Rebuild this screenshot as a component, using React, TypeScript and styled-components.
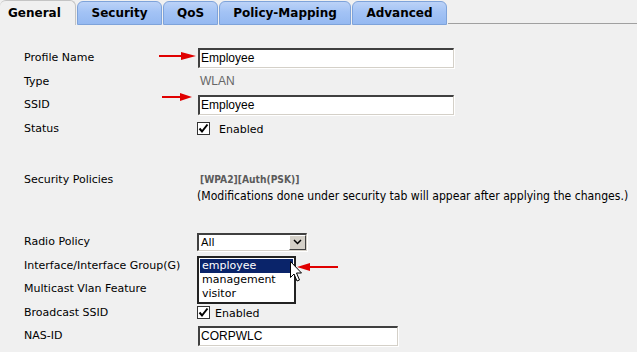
import React from "react";
import styled, { createGlobalStyle } from "styled-components";

const Global = createGlobalStyle`
  html, body { margin: 0; padding: 0; background: #f0f0f0; }
  body { font-family: "DejaVu Sans", Verdana, sans-serif; font-size: 11px; color: #000; }
`;

const Page = styled.div`
  position: relative;
  width: 637px;
  height: 352px;
  overflow: hidden;
  background: #f0f0f0;
`;

const TabBar = styled.div`
  display: flex;
  align-items: flex-end;
  height: 25px;
  gap: 1px;
`;

const Tab = styled.div<{ $active?: boolean; $w: number }>`
  box-sizing: border-box;
  width: ${(p) => p.$w}px;
  display: flex;
  align-items: center;
  justify-content: ${(p) => (p.$active ? "flex-start" : "center")};
  padding-left: ${(p) => (p.$active ? "8px" : "0")};
  font-family: "DejaVu Sans", Verdana, sans-serif;
  font-weight: bold;
  font-size: 12px;
  color: #000;
  border-radius: 6px 6px 0 0;
  border: 1px solid ${(p) => (p.$active ? "#c4c4c4" : "#7ea3da")};
  border-left-width: ${(p) => (p.$active ? "0" : "1px")};
  border-bottom: ${(p) => (p.$active ? "none" : "1px solid #7ea3da")};
  background: ${(p) =>
    p.$active ? "#f0f0f0" : "linear-gradient(#bcd2f7, #a3c3f5 45%, #95b9f1)"};
  height: ${(p) => (p.$active ? "25px" : "24px")};
`;

const TabFill = styled.div`
  flex: 1;
  height: 1px;
  margin-bottom: 1px;
  background: #a0a0a0;
`;

const Form = styled.div`
  padding: 21px 0 0 24px;
  display: flex;
  flex-direction: column;
`;

const Row = styled.div<{ $h?: number; $mt?: number }>`
  display: grid;
  grid-template-columns: 173px 1fr;
  align-items: center;
  height: ${(p) => p.$h ?? 23.5}px;
  margin-top: ${(p) => p.$mt ?? 0}px;
`;

const Label = styled.div`
  font-family: "DejaVu Sans", Verdana, sans-serif;
  font-size: 11px;
  color: #000;
  white-space: nowrap;
`;

const Control = styled.div<{ $stretch?: boolean }>`
  position: relative;
  display: flex;
  align-items: center;
  align-self: ${(p) => (p.$stretch ? "stretch" : "auto")};
  white-space: nowrap;
`;

const TextInput = styled.input<{ $w: number }>`
  box-sizing: border-box;
  width: ${(p) => p.$w}px;
  height: 20px;
  margin: 0 0 0 1px;
  padding: 0 1px;
  font-family: "Liberation Sans", Arial, sans-serif;
  font-size: 12px;
  color: #000;
  background: #fff;
  border-style: solid;
  border-width: 2px 1px 1px 2px;
  border-color: #404040 #d4d0c8 #d4d0c8 #404040;
  box-shadow: 1px 1px 0 #ffffff;
  outline: none;
`;

const Plain = styled.span<{ $pl?: number }>`
  font-family: "Liberation Sans", Arial, sans-serif;
  font-size: 12px;
  color: #666;
  padding-left: ${(p) => p.$pl ?? 0}px;
`;

const Policies = styled.span`
  font-family: "DejaVu Sans", Verdana, sans-serif;
  font-stretch: condensed;
  font-weight: bold;
  font-size: 10.2px;
  color: #5a5a5a;
  padding-left: 3px;
`;

const Note = styled.span`
  font-family: "DejaVu Sans", Verdana, sans-serif;
  font-stretch: condensed;
  font-size: 12.1px;
  color: #000;
`;

const CheckBox = styled.span`
  box-sizing: border-box;
  width: 13px;
  height: 13px;
  background: #fff;
  border: 1px solid #333;
  display: inline-flex;
  align-items: center;
  justify-content: center;
`;

const CheckText = styled.span<{ $gap: number }>`
  margin-left: ${(p) => p.$gap}px;
  font-family: "DejaVu Sans", Verdana, sans-serif;
  font-size: 11px;
  padding-top: 3px;
`;

const Select = styled.div`
  box-sizing: border-box;
  width: 110px;
  height: 18px;
  display: flex;
  align-items: stretch;
  background: #fff;
  border-style: solid;
  border-width: 2px 1px 1px 2px;
  border-color: #404040 #d4d0c8 #d4d0c8 #404040;
  box-shadow: 1px 1px 0 #fff;
`;

const SelectValue = styled.span`
  flex: 1;
  padding-left: 2px;
  font-family: "DejaVu Sans", Verdana, sans-serif;
  font-size: 11px;
  line-height: 15px;
`;

const SelectButton = styled.span`
  box-sizing: border-box;
  width: 17px;
  background: #d4d0c8;
  border: 1px solid;
  border-color: #fff #404040 #404040 #fff;
  display: flex;
  align-items: center;
  justify-content: center;
`;

const ListBox = styled.div`
  position: absolute;
  top: 2px;
  left: 0;
  box-sizing: border-box;
  width: 99px;
  padding: 1px;
  background: #fff;
  border: 2px solid #222;
  display: flex;
  flex-direction: column;
  z-index: 2;
`;

const Option = styled.div<{ $sel?: boolean }>`
  height: 14px;
  line-height: 14px;
  padding-left: 2px;
  font-family: "DejaVu Sans", Verdana, sans-serif;
  font-size: 11px;
  background: ${(p) => (p.$sel ? "#0a246a" : "transparent")};
  color: ${(p) => (p.$sel ? "#fff" : "#000")};
`;

const Overlay = styled.svg`
  position: absolute;
  left: 0;
  top: 0;
  pointer-events: none;
  z-index: 5;
`;

const Check = () => (
  <svg width="11" height="11" viewBox="0 0 11 11">
    <path d="M1.5 5.5 L4 8.5 L9.5 1.5" fill="none" stroke="#000" strokeWidth="2" />
  </svg>
);

export default function App() {
  return (
    <Page>
      <Global />
      <TabBar>
        <Tab $active $w={76}>General</Tab>
        <Tab $w={85}>Security</Tab>
        <Tab $w={55}>QoS</Tab>
        <Tab $w={132}>Policy-Mapping</Tab>
        <Tab $w={95}>Advanced</Tab>
        <TabFill />
      </TabBar>
      <Form>
        <Row>
          <Label>Profile Name</Label>
          <Control>
            <TextInput $w={256} readOnly value="Employee" />
          </Control>
        </Row>
        <Row>
          <Label>Type</Label>
          <Control>
            <Plain $pl={3}>WLAN</Plain>
          </Control>
        </Row>
        <Row>
          <Label>SSID</Label>
          <Control>
            <TextInput $w={256} readOnly value="Employee" />
          </Control>
        </Row>
        <Row>
          <Label>Status</Label>
          <Control>
            <CheckBox><Check /></CheckBox>
            <CheckText $gap={9}>Enabled</CheckText>
          </Control>
        </Row>
        <Row $h={20} $mt={29}>
          <Label>Security Policies</Label>
          <Control>
            <Policies>[WPA2][Auth(PSK)]</Policies>
          </Control>
        </Row>
        <Row $h={14}>
          <Label></Label>
          <Control>
            <Note>(Modifications done under security tab will appear after applying the changes.)</Note>
          </Control>
        </Row>
        <Row $mt={27}>
          <Label>Radio Policy</Label>
          <Control>
            <Select>
              <SelectValue>All</SelectValue>
              <SelectButton>
                <svg width="9" height="6" viewBox="0 0 9 6">
                  <path d="M1 1 L4.5 4.5 L8 1" fill="none" stroke="#000" strokeWidth="1.5" />
                </svg>
              </SelectButton>
            </Select>
          </Control>
        </Row>
        <Row>
          <Label>Interface/Interface Group(G)</Label>
          <Control $stretch>
            <ListBox>
              <Option $sel>employee</Option>
              <Option>management</Option>
              <Option>visitor</Option>
            </ListBox>
          </Control>
        </Row>
        <Row>
          <Label>Multicast Vlan Feature</Label>
          <Control />
        </Row>
        <Row>
          <Label>Broadcast SSID</Label>
          <Control>
            <CheckBox><Check /></CheckBox>
            <CheckText $gap={5}>Enabled</CheckText>
          </Control>
        </Row>
        <Row>
          <Label>NAS-ID</Label>
          <Control>
            <TextInput $w={200} readOnly value="CORPWLC" />
          </Control>
        </Row>
      </Form>
      <Overlay width="637" height="352" viewBox="0 0 637 352">
        <g fill="#e00000" stroke="none">
          <rect x="159" y="55" width="24" height="2" />
          <polygon points="181,52 196,56 181,60" />
          <rect x="162" y="96" width="20" height="2" />
          <polygon points="180,93 192,97 180,101" />
          <rect x="308" y="266" width="30" height="2" />
          <polygon points="310,263 297,267 310,271" />
        </g>
        <path
          d="M290.5 261.5 L290.5 277.5 L294 274 L297 281 L299.5 280 L296.5 273 L301.5 273 Z"
          fill="#fff"
          stroke="#000"
          strokeWidth="1"
        />
      </Overlay>
    </Page>
  );
}
